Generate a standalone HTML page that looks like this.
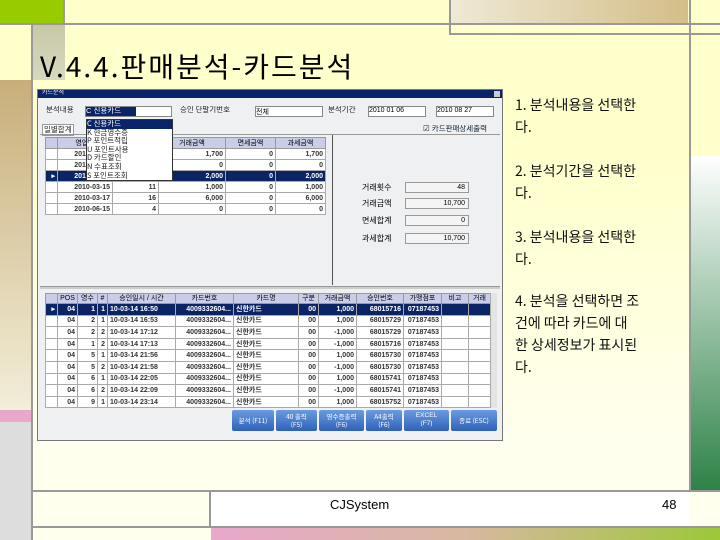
<!DOCTYPE html>
<html><head><meta charset="utf-8"><style>
*{margin:0;padding:0;box-sizing:border-box}
body{width:720px;height:540px;position:relative;overflow:hidden;background:#FFFFEE;font-family:"Liberation Sans","Noto Sans CJK KR",sans-serif}
.a{position:absolute}
.k{font-family:"Noto Sans CJK KR","Liberation Sans",sans-serif}
.g{font-size:7.5px;line-height:1.1;color:#222;white-space:nowrap;overflow:hidden}
table{border-collapse:collapse;position:absolute;font-size:7px;font-family:"Liberation Sans","Noto Sans CJK KR",sans-serif;table-layout:fixed}
td{border:1px solid #aaa;padding:0 2px;white-space:nowrap;overflow:hidden;background:#fff;text-align:right;line-height:1;vertical-align:middle;font-weight:bold;color:#333}
th{border:1px solid #999;background:#c9cde8;font-weight:normal;white-space:nowrap;overflow:hidden;line-height:1}
tr.s td{background:#0b2466;color:#fff}
.btn{position:absolute;top:410px;height:21px;background:linear-gradient(#6a9be0,#2f62b8);color:#fff;font-size:6.5px;text-align:center;line-height:8px;padding-top:2px;border-radius:2px}
.box{position:absolute;left:405px;width:64px;height:11px;border:1px solid #999;background:#f4f4f4;font-size:7px;text-align:right;padding-right:3px;line-height:10px}
.lab{position:absolute;left:362px;font-size:8px;line-height:11px}
.rt{position:absolute;left:515px;font-size:14px;line-height:22px;color:#111}
</style></head><body>
<div class="a" style="left:0;top:0;width:720px;height:156px;background:#FFFFCC"></div>
<div class="a" style="left:0;top:156px;width:720px;height:300px;background:linear-gradient(#FFFFCC,#FFFFF0)"></div>
<div class="a" style="left:0;top:0;width:63px;height:23px;background:#99CC00"></div>
<div class="a" style="left:63px;top:0;width:2px;height:25px;background:#999"></div>
<div class="a" style="left:450px;top:0;width:238px;height:24px;background:linear-gradient(90deg,#EFE9D6,#D4BE88)"></div>
<div class="a" style="left:449px;top:0;width:2px;height:35px;background:#999"></div>
<div class="a" style="left:0;top:23px;width:720px;height:2px;background:#999"></div>
<div class="a" style="left:449px;top:33px;width:271px;height:2px;background:#999"></div>
<div class="a" style="left:31px;top:25px;width:34px;height:55px;background:linear-gradient(#C8C8A8,#D8D8C0)"></div>
<div class="a" style="left:0;top:80px;width:31px;height:330px;background:linear-gradient(#C8AE7A,#F2EED8)"></div>
<div class="a" style="left:0;top:410px;width:31px;height:12px;background:#E8A8CC"></div>
<div class="a" style="left:0;top:422px;width:31px;height:118px;background:#DDDDDD"></div>
<div class="a" style="left:31px;top:25px;width:2px;height:515px;background:#999"></div>
<div class="a" style="left:689px;top:0;width:2px;height:492px;background:#999"></div>
<div class="a" style="left:691px;top:156px;width:29px;height:334px;background:linear-gradient(#fff,#2E8248)"></div>
<div class="a" style="left:33px;top:490px;width:687px;height:2px;background:#999"></div>
<div class="a" style="left:209px;top:490px;width:2px;height:38px;background:#999"></div>
<div class="a" style="left:211px;top:492px;width:478px;height:34px;background:#fff"></div>
<div class="a" style="left:33px;top:526px;width:687px;height:2px;background:#999"></div>
<div class="a" style="left:211px;top:528px;width:509px;height:12px;background:linear-gradient(90deg,#E8A8CC,#D8B8A0,#9CC838)"></div>
<div class="a" style="left:330px;top:497px;font-size:13px">CJSystem</div>
<div class="a" style="left:662px;top:497px;font-size:13px">48</div>

<div class="a k" style="left:40px;top:48px;font-size:28px;line-height:36px;letter-spacing:2px">V.4.4.판매분석-카드분석</div>

<div class="rt k" style="top:94px">1. 분석내용을 선택한<br>다.</div>
<div class="rt k" style="top:160px">2. 분석기간을 선택한<br>다.</div>
<div class="rt k" style="top:226px">3. 분석내용을 선택한<br>다.</div>
<div class="rt k" style="top:290px">4. 분석을 선택하면 조<br>건에 따라 카드에 대<br>한 상세정보가 표시된<br>다.</div>

<div class="a" style="left:37px;top:89px;width:466px;height:352px;background:#EEF0F2;border:1px solid #777"></div>
<div class="a" style="left:38px;top:90px;width:464px;height:8px;background:#0A246A"></div>
<div class="a g" style="left:42px;top:90px;color:#fff;font-size:6px">카드분석</div>
<div class="a" style="left:494px;top:91px;width:6px;height:6px;background:#ccc"></div>
<div class="a g k" style="left:46px;top:106px">분석내용</div>
<div class="a" style="left:85px;top:106px;width:87px;height:11px;background:#fff;border:1px solid #888"></div>
<div class="a g" style="left:86px;top:107px;width:50px;height:9px;background:#0A246A;color:#fff">C 신용카드</div>
<div class="a g k" style="left:180px;top:106px">승인 단말기번호</div>
<div class="a" style="left:255px;top:106px;width:68px;height:11px;background:#fff;border:1px solid #888;font-size:7px">전체</div>
<div class="a g k" style="left:328px;top:106px">분석기간</div>
<div class="a" style="left:368px;top:106px;width:58px;height:11px;background:#fff;border:1px solid #888;font-size:7px">2010 01 06</div>
<div class="a" style="left:436px;top:106px;width:58px;height:11px;background:#fff;border:1px solid #888;font-size:7px">2010 08 27</div>
<div class="a g" style="left:42px;top:124px;border:1px solid #999;background:#fff;padding:1px">일별합계</div>
<div class="a g" style="left:423px;top:125px;color:#123">☑ 카드판매상세출력</div>
<div class="a" style="left:40px;top:134px;width:460px;height:1px;background:#999"></div>
<div class="a" style="left:332px;top:135px;width:1px;height:150px;background:#555"></div>

<table style="left:45px;top:137px;width:280px">
<col style="width:12px"><col style="width:55px"><col style="width:46px"><col style="width:67px"><col style="width:50px"><col style="width:50px">
<tr style="height:11px"><th></th><th>영업일</th><th></th><th>거래금액</th><th>면세금액</th><th>과세금액</th></tr>
<tr style="height:11px"><td></td><td>2010-03-14</td><td>4</td><td>1,700</td><td>0</td><td>1,700</td></tr>
<tr style="height:11px"><td></td><td>2010-03-15</td><td>2</td><td>0</td><td>0</td><td>0</td></tr>
<tr class="s" style="height:11px"><td>▸</td><td>2010-03-16</td><td>11</td><td>2,000</td><td>0</td><td>2,000</td></tr>
<tr style="height:11px"><td></td><td>2010-03-15</td><td>11</td><td>1,000</td><td>0</td><td>1,000</td></tr>
<tr style="height:11px"><td></td><td>2010-03-17</td><td>16</td><td>6,000</td><td>0</td><td>6,000</td></tr>
<tr style="height:11px"><td></td><td>2010-06-15</td><td>4</td><td>0</td><td>0</td><td>0</td></tr>
</table>
<div class="a g k" style="left:86px;top:119px;width:87px;height:62px;background:#fff;border:1px solid #333;font-size:7.5px;line-height:8.6px;white-space:pre"><span style="background:#0A246A;color:#fff;display:block">C 신용카드</span>K 현금영수증
P 포인트적립
U 포인트사용
D 카드할인
N 수표조회
S 포인트조회</div>

<div class="lab k" style="top:182px">거래횟수</div><div class="box" style="top:182px">48</div>
<div class="lab k" style="top:198px">거래금액</div><div class="box" style="top:198px">10,700</div>
<div class="lab k" style="top:215px">면세합계</div><div class="box" style="top:215px">0</div>
<div class="lab k" style="top:233px">과세합계</div><div class="box" style="top:233px">10,700</div>

<div class="a" style="left:40px;top:286px;width:460px;height:3px;background:#ccc;border-top:1px solid #999"></div>
<table style="left:45px;top:293px;width:445px">
<col style="width:12px"><col style="width:20px"><col style="width:20px"><col style="width:10px"><col style="width:68px"><col style="width:58px"><col style="width:65px"><col style="width:20px"><col style="width:38px"><col style="width:47px"><col style="width:38px"><col style="width:27px"><col style="width:22px">
<tr style="height:10px"><th></th><th>POS</th><th>영수</th><th>#</th><th>승인일시 / 시간</th><th>카드번호</th><th>카드명</th><th>구분</th><th>거래금액</th><th>승인번호</th><th>가맹점포</th><th>비고</th><th>거래</th></tr>
<tr class="s" style="height:11.6px"><td>▸</td><td>04</td><td>1</td><td>1</td><td style="text-align:left">10-03-14 16:50</td><td>4009332604...</td><td style="text-align:left">신한카드</td><td>00</td><td>1,000</td><td>68015716</td><td>07187453</td><td></td><td></td></tr>
<tr style="height:11.6px"><td></td><td>04</td><td>2</td><td>1</td><td style="text-align:left">10-03-14 16:53</td><td>4009332604...</td><td style="text-align:left">신한카드</td><td>00</td><td>1,000</td><td>68015729</td><td>07187453</td><td></td><td></td></tr>
<tr style="height:11.6px"><td></td><td>04</td><td>2</td><td>2</td><td style="text-align:left">10-03-14 17:12</td><td>4009332604...</td><td style="text-align:left">신한카드</td><td>00</td><td>-1,000</td><td>68015729</td><td>07187453</td><td></td><td></td></tr>
<tr style="height:11.6px"><td></td><td>04</td><td>1</td><td>2</td><td style="text-align:left">10-03-14 17:13</td><td>4009332604...</td><td style="text-align:left">신한카드</td><td>00</td><td>-1,000</td><td>68015716</td><td>07187453</td><td></td><td></td></tr>
<tr style="height:11.6px"><td></td><td>04</td><td>5</td><td>1</td><td style="text-align:left">10-03-14 21:56</td><td>4009332604...</td><td style="text-align:left">신한카드</td><td>00</td><td>1,000</td><td>68015730</td><td>07187453</td><td></td><td></td></tr>
<tr style="height:11.6px"><td></td><td>04</td><td>5</td><td>2</td><td style="text-align:left">10-03-14 21:58</td><td>4009332604...</td><td style="text-align:left">신한카드</td><td>00</td><td>-1,000</td><td>68015730</td><td>07187453</td><td></td><td></td></tr>
<tr style="height:11.6px"><td></td><td>04</td><td>6</td><td>1</td><td style="text-align:left">10-03-14 22:05</td><td>4009332604...</td><td style="text-align:left">신한카드</td><td>00</td><td>1,000</td><td>68015741</td><td>07187453</td><td></td><td></td></tr>
<tr style="height:11.6px"><td></td><td>04</td><td>6</td><td>2</td><td style="text-align:left">10-03-14 22:09</td><td>4009332604...</td><td style="text-align:left">신한카드</td><td>00</td><td>-1,000</td><td>68015741</td><td>07187453</td><td></td><td></td></tr>
<tr style="height:11.6px"><td></td><td>04</td><td>9</td><td>1</td><td style="text-align:left">10-03-14 23:14</td><td>4009332604...</td><td style="text-align:left">신한카드</td><td>00</td><td>1,000</td><td>68015752</td><td>07187453</td><td></td><td></td></tr>
</table>
<div class="a" style="left:490px;top:293px;width:7px;height:115px;background:#e4e4e4;border-left:1px solid #aaa"></div>
<div class="btn k" style="left:232px;width:42px;padding-top:6px">분석 (F11)</div>
<div class="btn k" style="left:276px;width:41px">40 출력<br>(F5)</div>
<div class="btn k" style="left:319px;width:45px">영수증출력<br>(F6)</div>
<div class="btn k" style="left:366px;width:36px">A4출력<br>(F6)</div>
<div class="btn" style="left:404px;width:45px">EXCEL<br>(F7)</div>
<div class="btn k" style="left:451px;width:46px;padding-top:6px">종료 (ESC)</div>
</body></html>
